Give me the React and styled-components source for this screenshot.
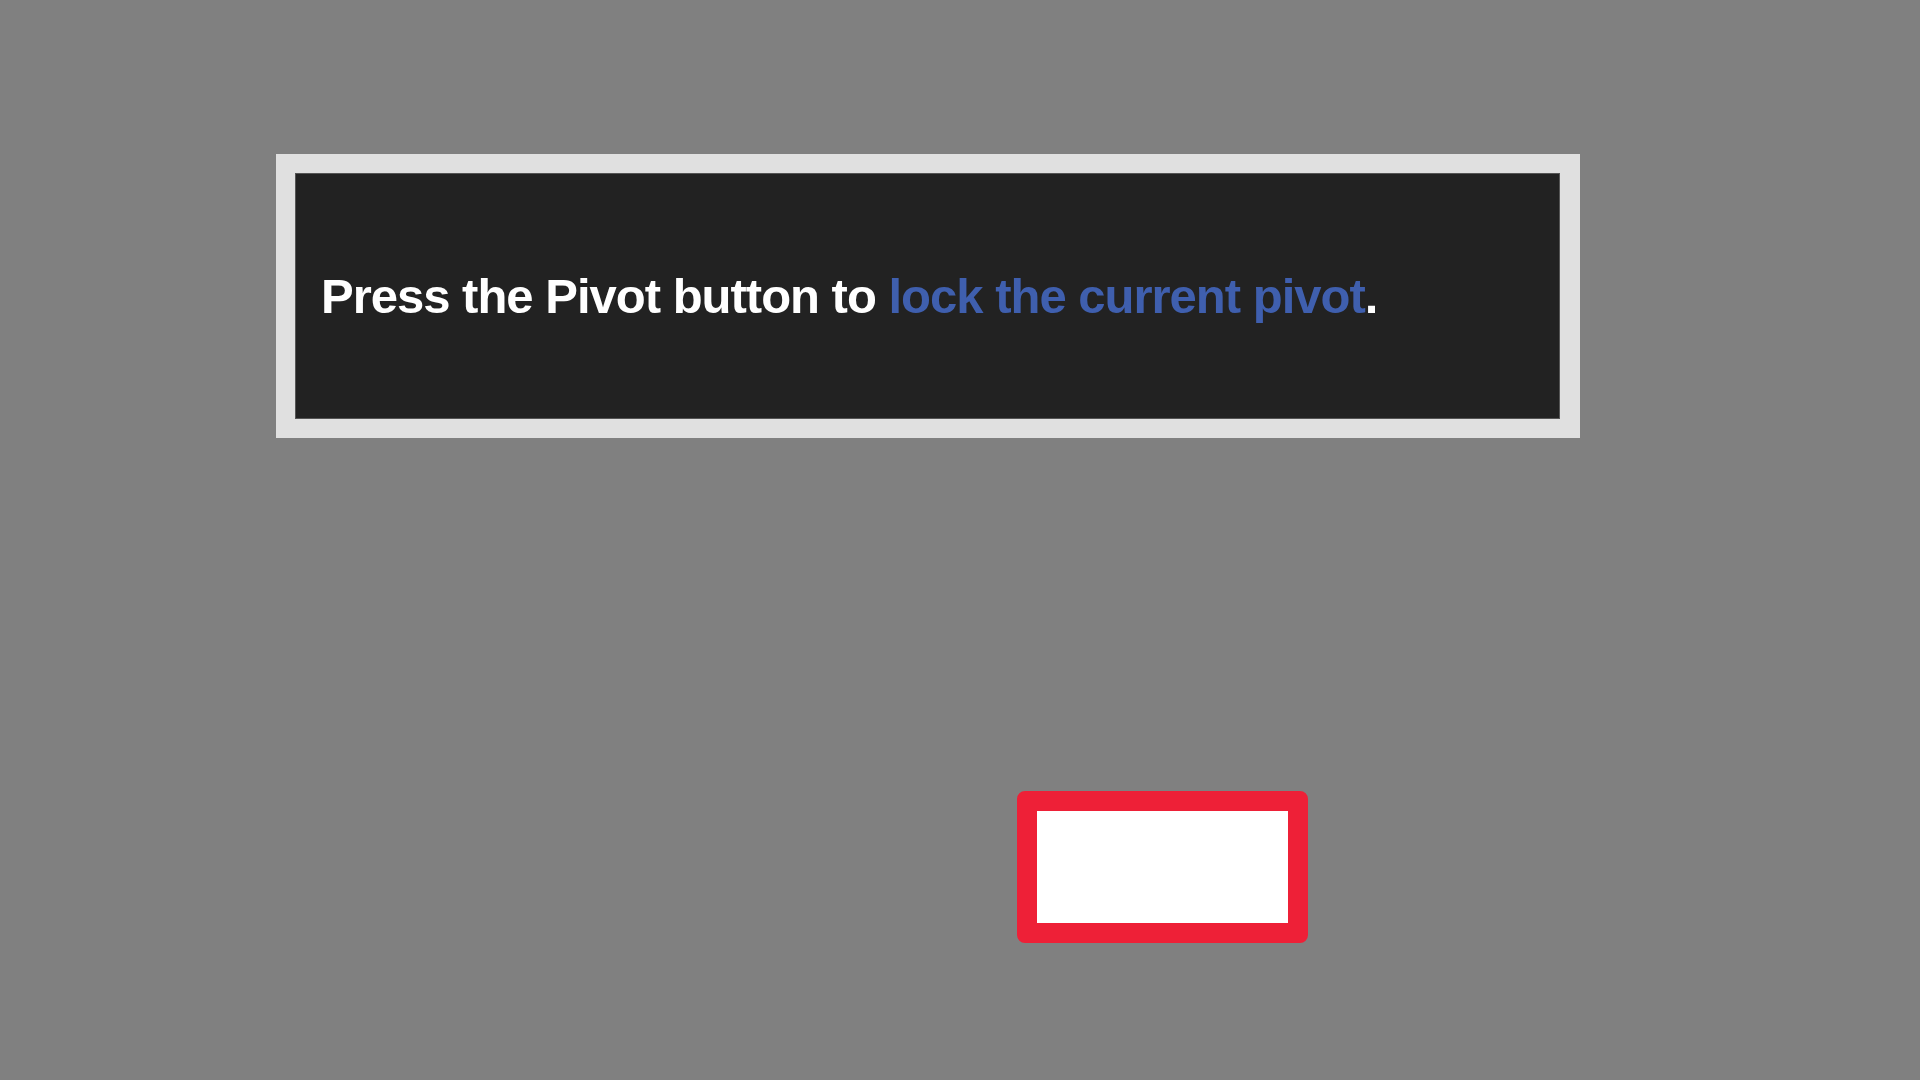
import React from "react";
import styled, { createGlobalStyle } from "styled-components";

const Global = createGlobalStyle`
  html, body { margin: 0; padding: 0; background: #808080; }
  body { font-family: "Liberation Sans", Arial, sans-serif; }
`;

const Page = styled.div`
  width: 1920px;
  height: 1080px;
  box-sizing: border-box;
  padding: 154px 0 0 276px;
  display: flex;
  flex-direction: column;
  align-items: flex-start;
  overflow: hidden;
`;

const Dialog = styled.div`
  width: 1304px;
  height: 284px;
  box-sizing: border-box;
  border: 19px solid #e0e0e0;
  border-right-width: 20px;
  background: #222222;
  box-shadow: inset 0 0 0 1px #555;
  display: flex;
  align-items: center;
  padding: 0 25px 0 26px;
`;

const Message = styled.p`
  margin: 0;
  color: #ffffff;
  font-family: "Liberation Sans", Arial, sans-serif;
  font-weight: 700;
  font-size: 49px;
  letter-spacing: -1.0px;
  line-height: 1;
  padding-top: 0px;
`;

const Highlight = styled.span`
  color: #3f5fae;
`;

const Target = styled.div`
  margin: 353px 0 0 741px;
  width: 291px;
  height: 152px;
  box-sizing: border-box;
  border: 20px solid #ee2037;
  border-radius: 8px;
  background: #ffffff;
`;

export default function App() {
  return (
    <>
      <Global />
      <Page>
        <Dialog>
          <Message>
            Press the Pivot button to <Highlight>lock the current pivot</Highlight>.
          </Message>
        </Dialog>
        <Target />
      </Page>
    </>
  );
}
